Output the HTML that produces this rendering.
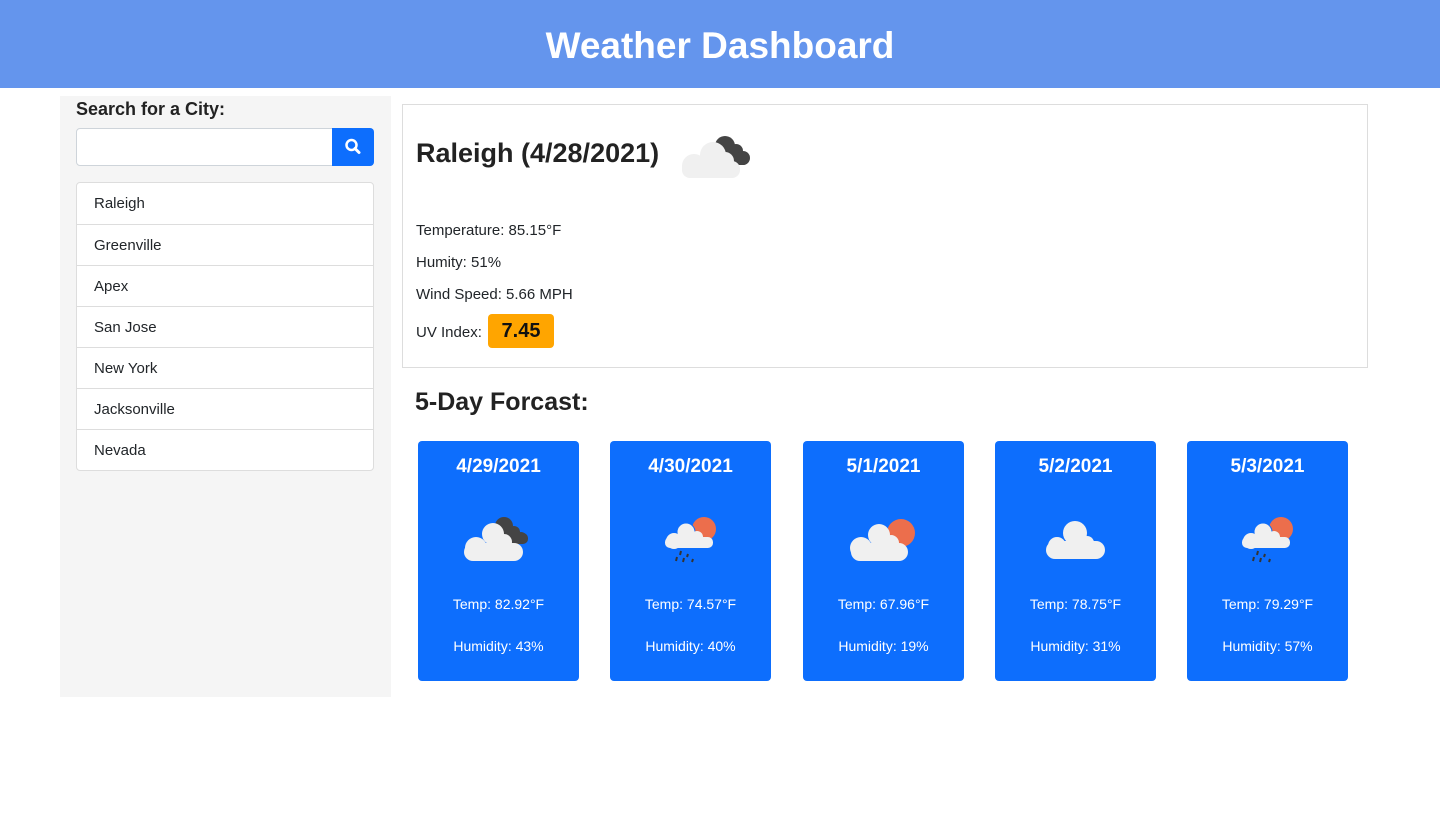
<!DOCTYPE html>
<html><head><meta charset="utf-8"><style>
*{box-sizing:border-box;margin:0;padding:0}
body{width:1440px;height:840px;background:#fff;font-family:"Liberation Sans",sans-serif;color:#212529;position:relative;overflow:hidden}
header{position:absolute;left:0;top:0;width:1440px;height:88px;background:#6495ed;color:#fff;text-align:center;font-size:37px;font-weight:bold;line-height:92px}
.side{position:absolute;left:60px;top:96px;width:331px;height:601px;background:#f5f5f5}
.side h4{position:absolute;left:16px;top:3px;font-size:18px;font-weight:bold;color:#222}
.inp{position:absolute;left:16px;top:32px;width:257px;height:38px;background:#fff;border:1px solid #ced4da;border-radius:4px 0 0 4px}
.btn{position:absolute;left:272px;top:32px;width:42px;height:38px;background:#0d6efd;border-radius:0 4px 4px 0}
.list{position:absolute;left:16px;top:86px;width:298px;border:1px solid #ddd;border-radius:4px;background:#fff}
.list div{height:41px;line-height:41px;padding-left:17px;font-size:15px;border-top:1px solid #ddd}
.list div:first-child{border-top:none}
.main{position:absolute;left:402px;top:104px;width:966px;height:264px;border:1px solid #ddd}
.main h2{position:absolute;left:13px;top:33px;font-size:27px;font-weight:bold;color:#222}
.main p{position:absolute;left:13px;font-size:15px}
.uv{position:absolute;left:85px;top:209px;width:66px;height:34px;background:#ffa500;border-radius:4px;font-size:20px;font-weight:bold;text-align:center;line-height:34px;color:#111}
h3{position:absolute;left:415px;top:388px;font-size:25px;font-weight:bold;color:#222}
.card{position:absolute;top:441px;width:161px;height:240px;background:#0d6efd;border-radius:4px;color:#fff;text-align:center}
.card .d{position:absolute;top:15px;width:100%;font-size:19px;font-weight:bold}
.card svg{position:absolute;left:40px;top:66px}
.card .t{position:absolute;top:155px;width:100%;font-size:14px}
.card .h{position:absolute;top:197px;width:100%;font-size:14px}
</style></head><body>
<header>Weather Dashboard</header>
<div class="side">
<h4>Search for a City:</h4>
<div class="inp"></div>
<div class="btn"><svg width="42" height="38"><circle cx="19.5" cy="17" r="5" fill="none" stroke="#fff" stroke-width="2.5"/><line x1="23" y1="20.5" x2="27" y2="24.5" stroke="#fff" stroke-width="3" stroke-linecap="round"/></svg></div>
<div class="list"><div>Raleigh</div><div>Greenville</div><div>Apex</div><div>San Jose</div><div>New York</div><div>Jacksonville</div><div>Nevada</div></div>
</div>
<div class="main">
<h2>Raleigh (4/28/2021)</h2>
<svg style="position:absolute;left:276px;top:26px" width="80" height="50"><g fill="#444"><circle cx="46" cy="15" r="10"/><circle cx="57" cy="20" r="7"/><circle cx="64" cy="27" r="7"/><rect x="40" y="22" width="30" height="12" rx="6"/></g><g fill="#f0f0f0"><circle cx="34" cy="24" r="13"/><circle cx="46" cy="30" r="9"/><circle cx="15" cy="35" r="12"/><rect x="3" y="30" width="58" height="17" rx="8"/></g></svg>
<p style="top:117px">Temperature: 85.15°F</p>
<p style="top:149px">Humity: 51%</p>
<p style="top:181px">Wind Speed: 5.66 MPH</p>
<p style="top:219px">UV Index:</p>
<div class="uv">7.45</div>
</div>
<h3>5-Day Forcast:</h3>

<div class="card" style="left:418px"><div class="d">4/29/2021</div>
<svg width="80" height="60"><g fill="#444"><circle cx="46" cy="19" r="9"/><circle cx="56" cy="25" r="6"/><circle cx="63" cy="31" r="6"/><rect x="42" y="26" width="28" height="11" rx="5"/></g><g fill="#f0f0f0"><circle cx="35" cy="27" r="11"/><circle cx="46" cy="35" r="8"/><circle cx="18" cy="41" r="11"/><rect x="6" y="36" width="59" height="18" rx="9"/></g></svg>
<div class="t">Temp: 82.92°F</div><div class="h">Humidity: 43%</div></div>

<div class="card" style="left:610px"><div class="d">4/30/2021</div>
<svg width="80" height="60"><circle cx="54" cy="22" r="12" fill="#ec6e4c"/><g fill="#f0f0f0" stroke="#0d6efd" stroke-width="1"><circle cx="36" cy="25" r="9"/></g><g fill="#f0f0f0"><circle cx="47" cy="30" r="6"/><circle cx="24" cy="34" r="8"/><rect x="15" y="30" width="48" height="11" rx="5"/></g><g stroke="#333" stroke-width="2"><line x1="31" y1="44" x2="30" y2="48"/><line x1="27" y1="50" x2="26" y2="54"/><line x1="34" y1="51" x2="33" y2="55"/><line x1="38" y1="47" x2="37" y2="50"/><line x1="43" y1="52" x2="42" y2="55"/></g></svg>
<div class="t">Temp: 74.57°F</div><div class="h">Humidity: 40%</div></div>

<div class="card" style="left:803px"><div class="d">5/1/2021</div>
<svg width="80" height="60"><circle cx="58" cy="26" r="14" fill="#ec6e4c"/><g fill="#f0f0f0"><circle cx="36" cy="28" r="11"/><circle cx="48" cy="36" r="8"/><circle cx="18" cy="41" r="11"/><rect x="8" y="36" width="57" height="18" rx="9"/></g></svg>
<div class="t">Temp: 67.96°F</div><div class="h">Humidity: 19%</div></div>

<div class="card" style="left:995px"><div class="d">5/2/2021</div>
<svg width="80" height="60"><g fill="#f0f0f0"><circle cx="40" cy="26" r="12"/><circle cx="52" cy="36" r="7"/><circle cx="22" cy="39" r="9"/><rect x="11" y="34" width="59" height="18" rx="9"/></g></svg>
<div class="t">Temp: 78.75°F</div><div class="h">Humidity: 31%</div></div>

<div class="card" style="left:1187px"><div class="d">5/3/2021</div>
<svg width="80" height="60"><circle cx="54" cy="22" r="12" fill="#ec6e4c"/><g fill="#f0f0f0" stroke="#0d6efd" stroke-width="1"><circle cx="36" cy="25" r="9"/></g><g fill="#f0f0f0"><circle cx="47" cy="30" r="6"/><circle cx="24" cy="34" r="8"/><rect x="15" y="30" width="48" height="11" rx="5"/></g><g stroke="#333" stroke-width="2"><line x1="31" y1="44" x2="30" y2="48"/><line x1="27" y1="50" x2="26" y2="54"/><line x1="34" y1="51" x2="33" y2="55"/><line x1="38" y1="47" x2="37" y2="50"/><line x1="43" y1="52" x2="42" y2="55"/></g></svg>
<div class="t">Temp: 79.29°F</div><div class="h">Humidity: 57%</div></div>
</body></html>
